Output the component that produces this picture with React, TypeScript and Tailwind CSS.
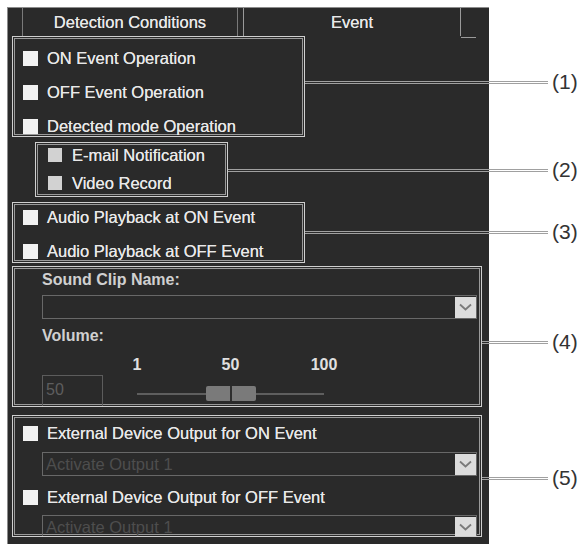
import React from "react";

const BOX = "border border-[#cfcfcf] shadow-[inset_0_0_0_1px_#2a2a2a,inset_0_0_0_2px_#9a9a9a]";
const TXT = "text-[16.5px] leading-[20px] text-[#e8e8e8] whitespace-nowrap [text-shadow:0_0_0.6px_#e8e8e8]";

function Check({ label, small }: { label: string; small?: boolean }) {
  return (
    <div className={small ? "flex items-center gap-[10px] h-[18px]" : "flex items-center gap-[9px] h-[20px]"}>
      <span className={small ? "w-[14px] h-[14px] bg-[#d2d2d2] shrink-0" : "w-[15px] h-[15px] bg-[#f2f2f2] shrink-0"} />
      <span className={TXT}>{label}</span>
    </div>
  );
}

function Chevron() {
  return (
    <svg width="13" height="8" viewBox="0 0 13 8" fill="none">
      <polyline points="1,1.5 6.5,6.5 12,1.5" stroke="#7a7a7a" strokeWidth="1.8" />
    </svg>
  );
}

function Select({ value }: { value?: string }) {
  return (
    <div className="flex items-center h-[24px] w-[435px] border border-[#686868] pl-[3px] shrink-0">
      <span className="flex-1 text-[16.5px] leading-[20px] text-[#4e4e4e] whitespace-nowrap">{value}</span>
      <span className="w-[21px] h-[21px] bg-[#dcdcdc] flex items-center justify-center">
        <Chevron />
      </span>
    </div>
  );
}

function Leader({ n, offset }: { n: string; offset: string }) {
  return (
    <div className={`flex-1 flex items-center h-[24px] ${offset}`}>
      <div className="flex-1 h-[3px] border-y border-[#a0a0a0]" />
      <span className="ml-[4px] w-[30px] text-[21px] leading-[24px] text-[#333] whitespace-nowrap">{n}</span>
    </div>
  );
}

export default function App() {
  return (
    <div className="w-[582px] h-[548px] bg-white pt-[7px] pl-[7px] overflow-hidden" style={{ fontFamily: '"Liberation Sans", Arial, sans-serif' }}>
      <div className="w-[482px] h-[537px] bg-[#2a2a2a] border-t border-l border-[#8c8c8c]">
        {/* Tabs */}
        <div className="flex items-start h-[28px]">
          <div className="ml-[14px] w-[216px] h-[28px] border-x border-[#7a7a7a] flex items-center justify-center">
            <span className={TXT}>Detection Conditions</span>
          </div>
          <div className="ml-[5px] w-[218px] h-[28px] border-x border-[#9a9a9a] flex items-center justify-center">
            <span className={TXT}>Event</span>
          </div>
          <div className="w-[15px] h-[30px] border-b border-[#9a9a9a]" />
        </div>

        {/* Groups */}
        <div className="flex flex-col pl-[4px]">
          {/* (1) */}
          <div className="flex items-start w-[570px]">
            <div className={`${BOX} w-[293px] h-[101px] pt-[11px] pl-[10px] flex flex-col gap-[14px] shrink-0`}>
              <Check label="ON Event Operation" />
              <Check label="OFF Event Operation" />
              <Check label="Detected mode Operation" />
            </div>
            <Leader n="(1)" offset="mt-[34px]" />
          </div>

          {/* (2) */}
          <div className="flex items-start w-[570px] mt-[5px]">
            <div className={`${BOX} ml-[23px] w-[193px] h-[55px] pt-[3px] pl-[12px] flex flex-col gap-[10px] shrink-0`}>
              <Check small label="E-mail Notification" />
              <Check small label="Video Record" />
            </div>
            <Leader n="(2)" offset="mt-[16px]" />
          </div>

          {/* (3) */}
          <div className="flex items-start w-[570px] mt-[5px]">
            <div className={`${BOX} w-[293px] h-[61px] pt-[4px] pl-[10px] flex flex-col gap-[14px] shrink-0`}>
              <Check label="Audio Playback at ON Event" />
              <Check label="Audio Playback at OFF Event" />
            </div>
            <Leader n="(3)" offset="mt-[18px]" />
          </div>

          {/* (4) */}
          <div className="flex items-start w-[570px] mt-[3px]">
            <div className={`${BOX} w-[470px] h-[141px] pt-[4px] pl-[29px] flex flex-col shrink-0 overflow-hidden`}>
              <span className="text-[16px] leading-[18px] font-bold text-[#d0d0d0]">Sound Clip Name:</span>
              <div className="mt-[6px]">
                <Select />
              </div>
              <span className="mt-[8px] text-[16px] leading-[18px] font-bold text-[#d0d0d0]">Volume:</span>
              <div className="flex items-start">
                <div className="mt-[30px] w-[61px] h-[32px] border border-[#5c5c5c] pl-[3px] pt-[4px] text-[16px] leading-[20px] text-[#5e5e5e]">
                  50
                </div>
                <div className="ml-[34px] w-[187px] flex flex-col">
                  <div className="mt-[11px] -mx-[15px] flex justify-between">
                    {["1", "50", "100"].map(t => (
                      <span key={t} className="w-[30px] text-center text-[16px] leading-[18px] font-bold text-[#e0e0e0]">{t}</span>
                    ))}
                  </div>
                  <div className="mt-[12px] h-[15px] relative flex items-center">
                    <div className="w-full h-[2px] bg-[#5e5e5e]" />
                    <div className="absolute left-1/2 top-0 -translate-x-1/2 w-[50px] h-[15px] rounded-[2px] bg-[#7a7a7a] flex justify-center">
                      <div className="w-[2px] h-full bg-[#2e2e2e]" />
                    </div>
                  </div>
                </div>
              </div>
            </div>
            <Leader n="(4)" offset="mt-[64px]" />
          </div>

          {/* (5) */}
          <div className="flex items-start w-[570px] mt-[8px]">
            <div className={`${BOX} w-[470px] h-[122px] pt-[7px] pl-[10px] flex flex-col shrink-0 overflow-hidden`}>
              <Check label="External Device Output for ON Event" />
              <div className="mt-[9px] ml-[19px]">
                <Select value="Activate Output 1" />
              </div>
              <div className="mt-[11px]">
                <Check label="External Device Output for OFF Event" />
              </div>
              <div className="mt-[8px] ml-[19px]">
                <Select value="Activate Output 1" />
              </div>
            </div>
            <Leader n="(5)" offset="mt-[51px]" />
          </div>
        </div>
      </div>
    </div>
  );
}
